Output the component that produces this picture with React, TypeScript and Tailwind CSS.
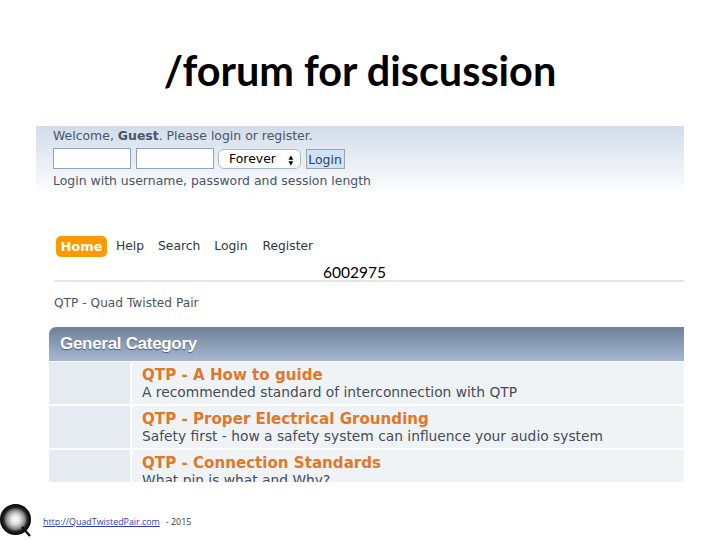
const forumFont = "font-['DejaVu_Sans',sans-serif]"

const boards = [
  { title: 'QTP - A How to guide', desc: 'A recommended standard of interconnection with QTP' },
  { title: 'QTP - Proper Electrical Grounding', desc: 'Safety first - how a safety system can influence your audio system' },
  { title: 'QTP - Connection Standards', desc: 'What pin is what and Why?' },
]

function QLogo() {
  return (
    <svg width="32" height="33" viewBox="0 0 32 33" className="shrink-0">
      <defs>
        <radialGradient id="q">
          <stop offset="0" stopColor="#ffffff" />
          <stop offset="0.3" stopColor="#e0e0e0" />
          <stop offset="0.6" stopColor="#8c8c8c" />
          <stop offset="0.78" stopColor="#262626" />
          <stop offset="1" stopColor="#000000" />
        </radialGradient>
      </defs>
      <circle cx="15.5" cy="15.5" r="15.5" fill="url(#q)" />
      <path d="M22 23l8 9" stroke="#111111" strokeWidth="2.5" />
    </svg>
  )
}

export default function App() {
  return (
    <div className="w-[720px] h-[540px] bg-white flex flex-col overflow-hidden">
      <h1 className="h-[126px] pt-[40px] text-center text-[41.4px] leading-[60px] font-bold text-black font-['Lato',sans-serif]">
        /forum for discussion
      </h1>

      <div className={`relative ml-[36px] w-[648px] h-[356px] overflow-hidden text-[#4b5563] ${forumFont}`}>
        <div className="h-[70px] pl-[17px] bg-gradient-to-b from-[#d2dcea] to-white text-[12.45px]">
          <p className="h-[22px] leading-[20px]">
            Welcome, <b>Guest</b>. Please login or register.
          </p>
          <div className="flex items-center gap-[4.5px] h-[21px]">
            <div className="w-[78px] h-[21px] bg-white border border-[#8aa5c8]" />
            <div className="w-[78px] h-[21px] bg-white border border-[#8aa5c8]" />
            <div className="w-[83px] h-[20px] flex items-center justify-between pt-[2px] pl-[10px] pr-[7px] bg-white border border-[#a9b9d0] rounded-[6px] text-black">
              <span>Forever</span>
              <span className="flex flex-col text-[6px] leading-[6px]">
                <span>▲</span>
                <span>▼</span>
              </span>
            </div>
            <div className="w-[39px] h-[20px] leading-[19px] text-center bg-[#cfe3f8] border border-[#a3a3a3] text-[#33415c]">Login</div>
          </div>
          <p className="h-[22px] leading-[22px] mt-[1px]">Login with username, password and session length</p>
        </div>

        <nav className="flex items-center mt-[39px] ml-[20px] h-[22px] text-[12.3px] text-[#2f3640]">
          <span className="w-[51px] h-[21px] leading-[21px] text-center rounded-[5px] bg-[#ff9900] text-white font-bold text-[13px]">Home</span>
          <span className="ml-[9px] pt-[1px]">Help</span>
          <span className="ml-[14px] pt-[1px]">Search</span>
          <span className="ml-[14px] pt-[1px]">Login</span>
          <span className="ml-[15px] pt-[1px]">Register</span>
        </nav>

        <div className="ml-[18px] mt-[23px] border-t-2 border-[#e6e6e6] pt-[13px] text-[12.2px] leading-[16px] text-[#4b5563]">
          QTP - Quad Twisted Pair
        </div>

        <div className="ml-[13px] mt-[16px]">
          <div className="h-[34px] leading-[34px] pl-[11px] rounded-tl-[7px] bg-gradient-to-b from-[#6f8099] to-[#a7b9d2] text-white font-bold text-[17px] tracking-[-0.3px] font-['Liberation_Sans',sans-serif] [text-shadow:0_1px_1px_#4a5a70]">
            General Category
          </div>
          {boards.map((b) => (
            <div key={b.title} className="flex gap-[2px] mt-[1px] mb-[2px] h-[42px]">
              <div className="w-[81px] bg-[#e6eaf1]" />
              <div className="flex-1 pl-[10px] pt-[4px] bg-[#f0f3f6]">
                <p className="text-[15.1px] leading-[18px] font-bold text-[#e0782a]">{b.title}</p>
                <p className="text-[13.8px] leading-[17px] text-[#444c58]">{b.desc}</p>
              </div>
            </div>
          ))}
        </div>

        <span className="absolute left-[287px] top-[137px] text-[15.5px] leading-[18px] text-black font-['Lato',sans-serif]">6002975</span>
      </div>

      <footer className="flex items-start mt-[22px] text-[8.9px] text-[#404040] font-['Open_Sans',sans-serif]">
        <QLogo />
        <div className="flex mt-[12px] leading-[12px]">
          <a className="ml-[11px] text-[#2a3cc4] underline">http://QuadTwistedPair.com</a>
          <span className="ml-[6px]">- 2015</span>
        </div>
      </footer>
    </div>
  )
}
